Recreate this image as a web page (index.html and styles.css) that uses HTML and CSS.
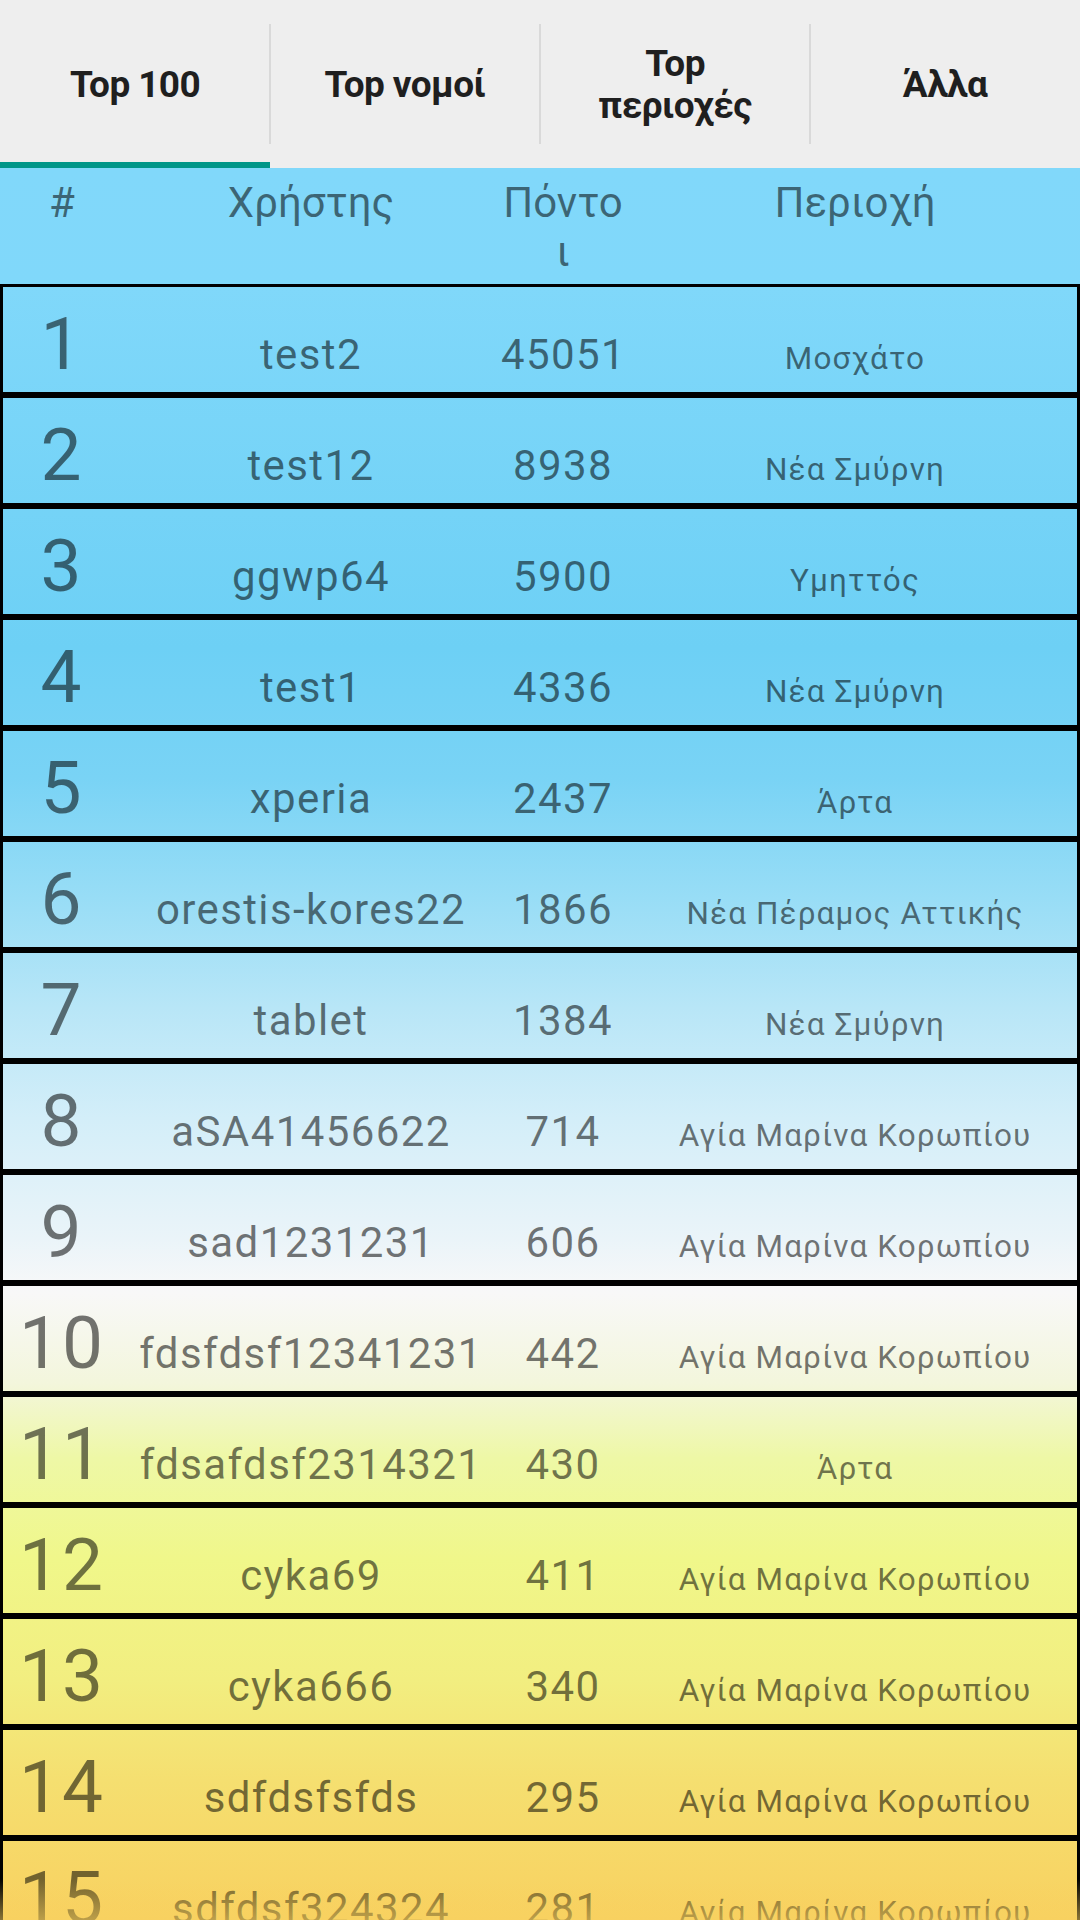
FILE: index.html
```html
<!DOCTYPE html>
<html lang="el">
<head>
<meta charset="utf-8">
<title>Top 100</title>
<link rel="stylesheet" href="styles.css">
</head>
<body>
<div class="screen">
  <nav class="tabs">
    <div class="tab tab-active"><span class="tab-label">Top 100</span></div>
    <div class="tab"><span class="tab-label">Top νομοί</span></div>
    <div class="tab"><span class="tab-label">Top περιοχές</span></div>
    <div class="tab"><span class="tab-label">Άλλα</span></div>
  </nav>
  <main class="content">
    <div class="head">
      <div class="c-rank">#</div>
      <div class="c-user">Χρήστης</div>
      <div class="c-pts c-pts-head">Πόντοι</div>
      <div class="c-area">Περιοχή</div>
    </div>
    <div class="list">
      <div class="row"><div class="c-rank">1</div><div class="c-user">test2</div><div class="c-pts">45051</div><div class="c-area">Μοσχάτο</div></div>
      <div class="row"><div class="c-rank">2</div><div class="c-user">test12</div><div class="c-pts">8938</div><div class="c-area">Νέα Σμύρνη</div></div>
      <div class="row"><div class="c-rank">3</div><div class="c-user">ggwp64</div><div class="c-pts">5900</div><div class="c-area">Υμηττός</div></div>
      <div class="row"><div class="c-rank">4</div><div class="c-user">test1</div><div class="c-pts">4336</div><div class="c-area">Νέα Σμύρνη</div></div>
      <div class="row"><div class="c-rank">5</div><div class="c-user">xperia</div><div class="c-pts">2437</div><div class="c-area">Άρτα</div></div>
      <div class="row"><div class="c-rank">6</div><div class="c-user">orestis-kores22</div><div class="c-pts">1866</div><div class="c-area">Νέα Πέραμος Αττικής</div></div>
      <div class="row"><div class="c-rank">7</div><div class="c-user">tablet</div><div class="c-pts">1384</div><div class="c-area">Νέα Σμύρνη</div></div>
      <div class="row"><div class="c-rank">8</div><div class="c-user">aSA41456622</div><div class="c-pts">714</div><div class="c-area">Αγία Μαρίνα Κορωπίου</div></div>
      <div class="row"><div class="c-rank">9</div><div class="c-user">sad1231231</div><div class="c-pts">606</div><div class="c-area">Αγία Μαρίνα Κορωπίου</div></div>
      <div class="row"><div class="c-rank">10</div><div class="c-user">fdsfdsf12341231</div><div class="c-pts">442</div><div class="c-area">Αγία Μαρίνα Κορωπίου</div></div>
      <div class="row"><div class="c-rank">11</div><div class="c-user">fdsafdsf2314321</div><div class="c-pts">430</div><div class="c-area">Άρτα</div></div>
      <div class="row"><div class="c-rank">12</div><div class="c-user">cyka69</div><div class="c-pts">411</div><div class="c-area">Αγία Μαρίνα Κορωπίου</div></div>
      <div class="row"><div class="c-rank">13</div><div class="c-user">cyka666</div><div class="c-pts">340</div><div class="c-area">Αγία Μαρίνα Κορωπίου</div></div>
      <div class="row"><div class="c-rank">14</div><div class="c-user">sdfdsfsfds</div><div class="c-pts">295</div><div class="c-area">Αγία Μαρίνα Κορωπίου</div></div>
      <div class="row"><div class="c-rank">15</div><div class="c-user">sdfdsf324324</div><div class="c-pts">281</div><div class="c-area">Αγία Μαρίνα Κορωπίου</div></div>
    </div>
    <div class="fade"></div>
  </main>
</div>
</body>
</html>
```
FILE: styles.css
```css
html, body {
  margin: 0;
  padding: 0;
}
body {
  width: 1080px;
  height: 1920px;
  overflow: hidden;
  font-family: Roboto, "Noto Sans", "DejaVu Sans", sans-serif;
  background: #eeeeee;
}
.screen {
  width: 1080px;
  height: 1920px;
  display: flex;
  flex-direction: column;
  overflow: hidden;
}

/* tabs */
.tabs {
  display: flex;
  height: 168px;
  flex: none;
  background: #eeeeee;
}
.tab {
  position: relative;
  flex: 1 1 0;
  display: flex;
  align-items: center;
  justify-content: center;
  padding: 8px 36px 0;
  text-align: center;
  border-bottom: 6px solid transparent;
}
.tab + .tab::before {
  content: "";
  position: absolute;
  left: -1px;
  top: 24px;
  width: 2px;
  height: 120px;
  background: #d9d9d9;
}
.tab-active {
  border-bottom-color: #009688;
}
.tab-label {
  font-size: 37px;
  line-height: 42px;
  font-weight: 700;
  letter-spacing: -0.6px;
  color: #1f1f1f;
}

/* content */
.content {
  position: relative;
  flex: 1 1 auto;
  background: linear-gradient(to bottom,
    #81d8fa 0px,
    #80d8fa 119px,
    #6dd0f5 480px,
    #79d3f5 610px,
    #98ddf6 730px,
    #b8e6f7 840px,
    #d3eef9 950px,
    #eaf4f9 1070px,
    #f8f8f8 1125px,
    #f3f6dc 1215px,
    #eef8a6 1290px,
    #f0f78a 1392px,
    #f2ee80 1512px,
    #f5df70 1612px,
    #f8d160 1752px);
  color: rgba(0, 0, 0, 0.54);
}
.head,
.row {
  display: grid;
  grid-template-columns: 118px 380px 124px 1fr;
  text-align: center;
}
.head {
  height: 116px;
  box-sizing: border-box;
  padding: 10px 3px 0;
  align-items: start;
  font-size: 42px;
  line-height: 49px;
}
.c-pts-head {
  word-break: break-all;
}
.row {
  height: 111px;
  box-sizing: border-box;
  border: 3px solid #000;
  padding-top: 14px;
  align-items: baseline;
  font-size: 42px;
  line-height: 49px;
  letter-spacing: 1.4px;
}
.row .c-rank {
  font-size: 73px;
  line-height: 86px;
  letter-spacing: 2px;
}
.c-area {
  padding-left: 8px;
}
.row .c-area {
  font-size: 31.5px;
  line-height: 37px;
  letter-spacing: 1.1px;
}
.fade {
  position: absolute;
  left: 0;
  right: 0;
  bottom: 0;
  height: 70px;
  background: linear-gradient(to bottom, rgba(248, 209, 96, 0) 0%, rgba(248, 209, 96, 0.95) 100%);
}
```
